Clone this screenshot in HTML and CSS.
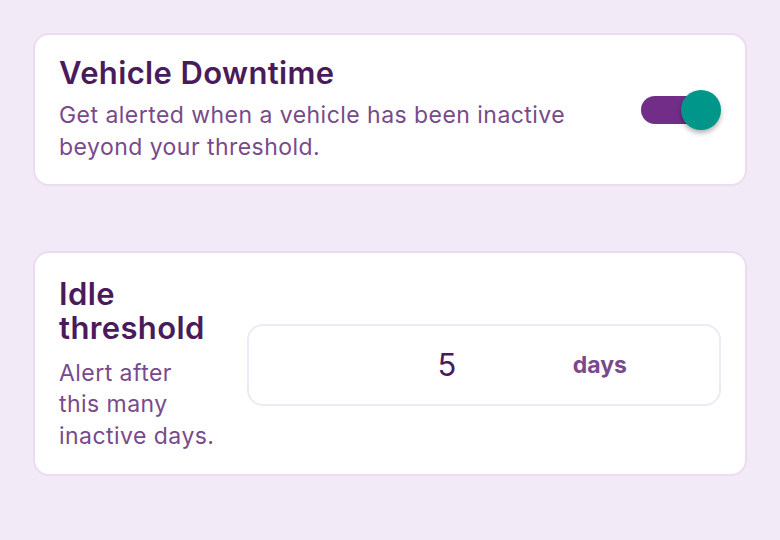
FILE: index.html
```html
<!DOCTYPE html>
<html lang="en">
<head>
  <meta charset="UTF-8">
  <meta name="viewport" content="width=device-width, initial-scale=1.0">
  <title>Vehicle Downtime Alerts</title>
  <link rel="stylesheet" href="styles.css">
</head>
<body>
  <div class="settings">
    <div class="card card-toggle">
      <div class="card-text">
        <h2>Vehicle Downtime</h2>
        <p>Get alerted when a vehicle has been inactive beyond your threshold.</p>
      </div>
      <label class="switch">
        <input type="checkbox" checked>
        <span class="track"></span>
        <span class="knob"></span>
      </label>
    </div>

    <div class="card card-threshold">
      <div class="card-text">
        <h2>Idle threshold</h2>
        <p>Alert after this many inactive days.</p>
      </div>
      <div class="number-field">
        <input type="text" value="5">
        <span class="unit">days</span>
      </div>
    </div>
  </div>
</body>
</html>
```

FILE: styles.css
```css
body {
  margin: 0;
  padding: 33px;
  background-color: #f3eaf7;
  font-family: Inter, "Noto Sans", sans-serif;
}
.settings {
  display: flex;
  flex-direction: column;
  gap: 65px;
}
.card {
  background-color: #fff;
  border: 2px solid #ebdcf1;
  border-radius: 16px;
  padding: 21px 24px 20px;
  display: flex;
  align-items: center;
  gap: 24px;
}
.card-text {
  flex: 1;
  min-width: 0;
}
.card h2 {
  margin: 0 0 10px;
  font-size: 31px;
  font-weight: 600;
  line-height: 1.1;
  letter-spacing: 0.012em;
  color: #4a1b5b;
}
.card p {
  margin: 0;
  font-size: 23px;
  line-height: 1.38;
  letter-spacing: 0.02em;
  color: #784a8c;
}
.switch {
  position: relative;
  flex: none;
  width: 80px;
  height: 40px;
  cursor: pointer;
}
.switch input {
  display: none;
}
.track {
  position: absolute;
  left: 0;
  top: 6px;
  width: 60px;
  height: 28px;
  border-radius: 14px;
  background-color: #722d88;
}
.knob {
  position: absolute;
  right: 0;
  top: 0;
  width: 40px;
  height: 40px;
  border-radius: 50%;
  background-color: #00968a;
  box-shadow: 0 3px 5px rgba(0, 0, 0, 0.3);
}
.card-threshold {
  display: grid;
  grid-template-columns: 156px minmax(0, 1fr);
  padding-top: 24px;
  padding-bottom: 21px;
  gap: 32px;
}
.card-threshold h2 {
  margin-bottom: 13px;
}
.number-field {
  display: flex;
  align-items: center;
  box-sizing: border-box;
  height: 82px;
  border: 2px solid #f1e8f5;
  border-radius: 16px;
  padding: 0 92px 0 24px;
}
.number-field input {
  flex: 1;
  width: 0;
  min-width: 0;
  border: none;
  outline: none;
  background: none;
  font-family: inherit;
  font-size: 31px;
  color: #4a1b5b;
  text-align: center;
  padding: 0 0 0 48px;
}
.unit {
  font-size: 23px;
  font-weight: 700;
  color: #784a8c;
}
```
